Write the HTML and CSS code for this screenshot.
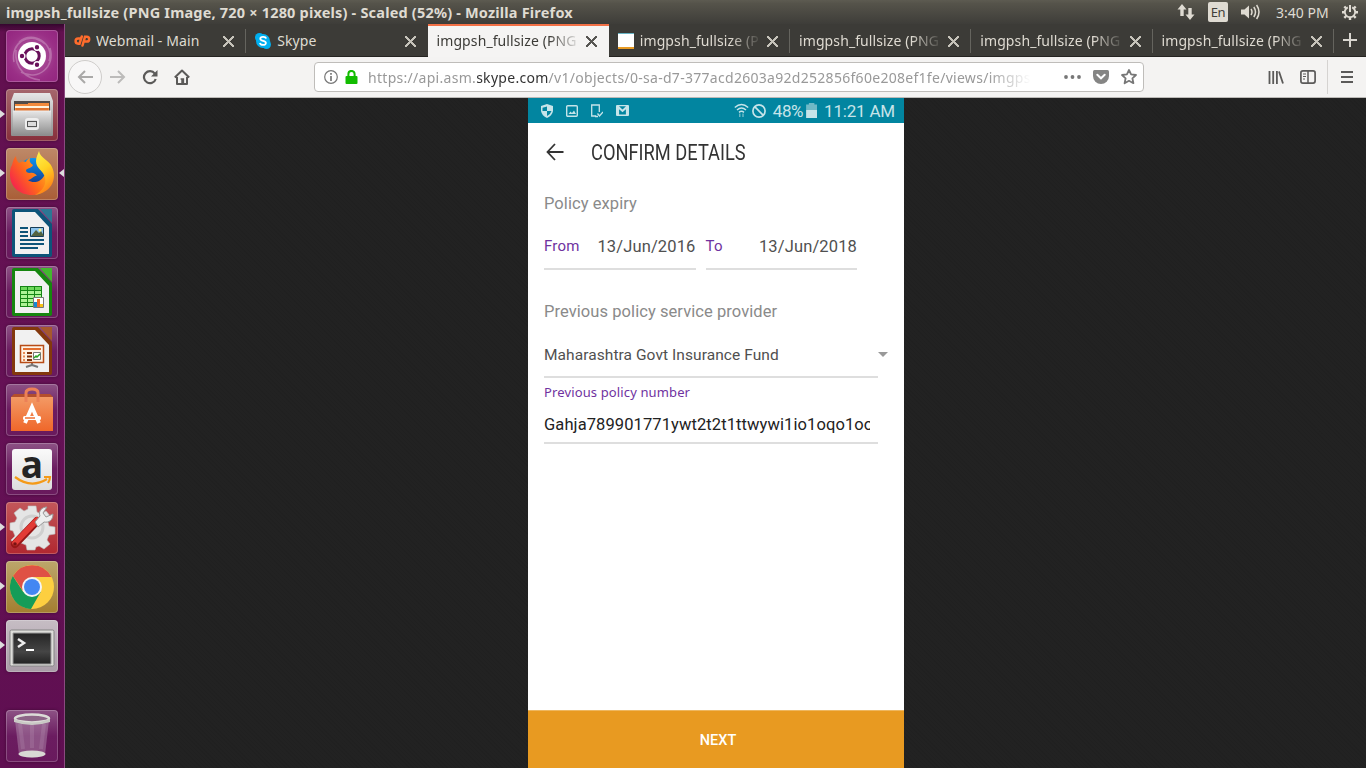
FILE: index.html
```html
<!DOCTYPE html>
<html lang="en">
<head>
<meta charset="utf-8">
<title>imgpsh_fullsize (PNG Image, 720 × 1280 pixels)</title>
<link rel="stylesheet" href="styles.css">
</head>
<body>
<header class="panel">
  <div class="panel-title">imgpsh_fullsize (PNG Image, 720 × 1280 pixels) - Scaled (52%) - Mozilla Firefox</div>
  <div class="panel-tray">
    <svg class="tray-net" width="18" height="18" viewBox="0 0 18 18" fill="#dfdbd2"><path d="M5 1 9.500 6.500H6.700V13H3.300V6.500H.5zM13 17 8.500 11.500h2.800V5h3.400v6.500h2.800z"/></svg>
    <span class="tray-lang">En</span>
    <svg class="tray-vol" width="20" height="18" viewBox="0 0 20 18"><path d="M0 6.500h3.500L8 2.500v13l-4.500-4H0z" fill="#dfdbd2"/><g fill="none" stroke="#dfdbd2" stroke-width="1.500"><path d="M10 6q2 3 0 6M12.800 4q3.400 5 0 10M15.600 2q4.800 7 0 14"/></g></svg>
    <span class="tray-clock">3:40 PM</span>
    <svg class="tray-gear" width="18" height="18" viewBox="0 0 18 18" fill="none" stroke="#dfdbd2"><path d="M6.800 4.300a5.200 5.200 0 1 0 4.400 0" stroke-width="1.900"/><path d="M9 2v7" stroke-width="2"/><path d="M1 9.200h2.600M14.400 9.200H17M3.300 3.500l1.900 1.900M14.700 3.500l-1.900 1.900M3.300 14.900l1.900-1.900M14.700 14.900l-1.900-1.900M9 14.400V17" stroke-width="2.400"/></svg>
  </div>
</header>
<div class="desktop">
  <nav class="launcher">
    <div class="tile tile-dash"><svg width="52" height="52" viewBox="0 0 52 52"><g fill="none" stroke="#fff" stroke-opacity=".25" stroke-width="1.500"><path d="M8 32C4 14 22 0 39 14M44 18c6 18-12 34-29 24M13 12C28-1 49 15 43 31M10 20c-2 20 12 29 24 30"/></g><circle cx="26" cy="26" r="14" fill="#fff"/><circle cx="26" cy="26" r="7.200" fill="none" stroke="#68105a" stroke-width="3"/><g stroke="#fff" stroke-width="1.400" fill="#68105a"><circle cx="16" cy="26" r="2.900"/><circle cx="31" cy="17.300" r="2.900"/><circle cx="31" cy="34.700" r="2.900"/></g></svg></div>
    <div class="tile tile-files is-running"><svg width="52" height="52" viewBox="0 0 52 52"><defs><linearGradient id="metal" x2="0" y2="1"><stop stop-color="#e6e6e6"/><stop offset="1" stop-color="#8e8e8e"/></linearGradient></defs><path d="M8 4h36l3 8v34q0 1-1 1H6q-1 0-1-1V12z" fill="url(#metal)"/><path d="M8 12h36v12H8z" fill="#514b48"/><path d="M9 15h13v-1h21v8H9z" fill="#f28a3c"/><path d="M9 17h34v2H9z" fill="#fff3dd"/><path d="M10 19h32v3H10z" fill="#df7430"/><path d="M7 22h38v24H7z" fill="url(#metal)"/><path d="M7 22h38" stroke="#eee"/><rect x="20" y="30" width="12" height="10" rx="2" fill="#ddd" stroke="#eee" stroke-width="2"/><rect x="21.500" y="32.500" width="9" height="5" fill="#ddd" stroke="#555"/></svg></div>
    <div class="tile tile-firefox is-running is-focused"><svg width="52" height="52" viewBox="0 0 52 52"><defs><linearGradient id="fox" x1=".8" x2="0" y1=".2" y2=".7"><stop stop-color="#ffb01e"/><stop offset=".5" stop-color="#ff6a1a"/><stop offset="1" stop-color="#f5224e"/></linearGradient><linearGradient id="globe" x2="0" y2="1"><stop stop-color="#0a94f0"/><stop offset="1" stop-color="#152f83"/></linearGradient><linearGradient id="tail" x2=".3" y2="1"><stop stop-color="#fff251"/><stop offset=".5" stop-color="#ffd324"/><stop offset="1" stop-color="#ff8418"/></linearGradient></defs><circle cx="27" cy="25" r="15" fill="url(#globe)"/><path d="M6 17c1-4 2-7 4-9 0 3 1 5 3 7 2-1 4-2 7-1 0-2 2-3 4-4-1 3 0 5 3 7-1 3-5 3-7 5 0 2 1 3 4 3 3-1 6 1 7 3-3-1-5 4-9 4 5 4 13 2 16-4l9-3c-1 14-10 22-21 22C13 47 4 38 4 27c0-4 0-7 2-10z" fill="url(#fox)"/><path d="M33 3c1 7 10 9 13 16 6 13-2 26-17 28 8-4 13-12 9-20-2-5-8-7-8-14 0-4 2-7 3-10z" fill="url(#tail)"/></svg></div>
    <div class="tile tile-office"><svg width="52" height="52" viewBox="0 0 52 52"><path d="M8 2h24l14 15v31q0 2-2 2H8q-2 0-2-2V4q0-2 2-2z" fill="#0d5479"/><path d="M34 2h12v14z" fill="#2c7794"/><path d="M9 5h20l14 15v27H9z" fill="#f1f1f1"/><path d="M14 21h8M14 25h8M14 29h8M14 33h24M14 37h24M14 41h18" stroke="#0d5479" stroke-width="2"/><path d="M24.500 20.500h13v9h-13z" fill="#8cc4ed" stroke="#183e57"/><path d="m25 29 5-6 3 3 2-2 3 5z" fill="#536340"/><circle cx="34" cy="23" r="1.500" fill="#fff68a"/></svg></div>
    <div class="tile tile-office"><svg width="52" height="52" viewBox="0 0 52 52"><path d="M8 2h24l14 15v31q0 2-2 2H8q-2 0-2-2V4q0-2 2-2z" fill="#16860f"/><path d="M34 2h12v14z" fill="#43b72f"/><path d="M9 5h20l14 15v27H9z" fill="#f1f1f1"/><path d="M14 20h22v21H14z" fill="#168515"/><g fill="#aef296"><path d="M15 21h6v3h-6zM22 21h6v3h-6zM29 21h6v3h-6z" fill="#6ed95b"/><path d="M15 25h6v3h-6zM22 25h6v3h-6zM29 25h6v3h-6zM15 29h6v3h-6zM22 29h6v3h-6zM29 29h6v3h-6zM15 33h6v3h-6zM22 33h6v3h-6zM15 37h6v3h-6zM22 37h6v3h-6z"/></g><path d="M27.500 31.500h10v10h-10z" fill="#fff" stroke="#777"/><path d="M28 36h3v5h-3z" fill="#1789d4"/><path d="M31 33h3v8h-3z" fill="#f06b23"/><path d="M34 38h3v3h-3z" fill="#f6c216"/></svg></div>
    <div class="tile tile-office"><svg width="52" height="52" viewBox="0 0 52 52"><path d="M8 2h24l14 15v31q0 2-2 2H8q-2 0-2-2V4q0-2 2-2z" fill="#83380d"/><path d="M34 2h12v14z" fill="#a6582d"/><path d="M9 5h20l14 15v27H9z" fill="#f1f1f1"/><path d="M26 38v2l-6 2M26 40l6 2" stroke="#777" stroke-width="2" fill="none"/><path d="M14.500 20.500h23v17h-23z" fill="#fff3e5" stroke="#b84c17" stroke-width="1.500"/><path d="M17 24h18" stroke="#e36e2e" stroke-width="2"/><path d="M17 28h2M17 31.500h2M17 35h2" stroke="#e88c55" stroke-width="2"/><path d="M21 28h5M21 31.500h5M21 35h5" stroke="#81340d" stroke-width="2"/><path d="M27.500 27.500h7v7h-7z" fill="#fff" stroke="#777"/><path d="m28 33 2-2 1 1 3-3" stroke="#28a322" stroke-width="1.500" fill="none"/></svg></div>
    <div class="tile tile-software"><svg width="52" height="52" viewBox="0 0 52 52"><defs><linearGradient id="bag" x2="0" y2="1"><stop stop-color="#f39a65"/><stop offset="1" stop-color="#ef672a"/></linearGradient></defs><path d="M5 13 8 10h36l3 3z" fill="#b44e2c"/><path d="M5 13h42v34H5z" fill="url(#bag)"/><path d="M20 18V9q0-4 6-4t6 4v9" fill="none" stroke="#ec8057" stroke-width="3"/><path d="m19 39 7-16 7 16" fill="none" stroke="#fff" stroke-width="3.800"/><rect x="17" y="32" width="18" height="4" rx="1.500" fill="#fff"/><path d="M19 34h10" stroke="#ef7035" stroke-width="1.500"/></svg></div>
    <div class="tile tile-office"><div class="amazon"><span>a</span><svg width="40" height="12" viewBox="0 0 40 12" fill="none" stroke="#f49a18" stroke-width="2.200"><path d="M2 2q16 12 32 2M31 2h6q0 3-2 6"/></svg></div></div>
    <div class="tile tile-settings is-running"><svg width="52" height="52" viewBox="0 0 52 52"><g fill="#e5e5e5" stroke="#bdbdbd" stroke-width=".6"><path d="m22 4 8 0 1 6 4 2 5-3 5 6-3 5 1 4 6 1v7l-6 1-2 5 3 4-6 5-5-3-3 1-1 3h-8l-1-5-5-2-5 3-5-6 4-4-2-5-3-1v-7l5-1 2-4-3-5 6-5 4 3 4-2z"/></g><circle cx="26" cy="25" r="11" fill="none" stroke="#cfcfcf" stroke-width="3"/><path d="m9 42 22-23" stroke="#971717" stroke-width="8" stroke-linecap="round"/><path d="m9 41 22-23" stroke="#e23b36" stroke-width="5.500" stroke-linecap="round"/><path d="m29 20 5-6c-2-5 2-9 7-9l-4 6 3 4 7-3c0 6-4 9-9 8l-6 5z" fill="#eee" stroke="#999"/><circle cx="9" cy="42" r="1.800" fill="#791313"/></svg></div>
    <div class="tile tile-chrome is-running"><svg width="52" height="52" viewBox="0 0 52 52"><circle cx="26" cy="26" r="22" fill="#fdcf40"/><path d="M6.900 15A22 22 0 0 0 25 48l9.700-17L26 26l-8.700 5z" fill="#159c58"/><path d="M26 16h19.500A22 22 0 0 0 7 15l10 15z" fill="#df5145"/><circle cx="26" cy="26" r="10" fill="#f4f4f4"/><circle cx="26" cy="26" r="8" fill="#4387f2"/></svg></div>
    <div class="tile tile-terminal is-running"><svg width="52" height="52" viewBox="0 0 52 52"><defs><linearGradient id="term" x2="0" y2="1"><stop stop-color="#252525"/><stop offset=".6" stop-color="#454545"/><stop offset="1" stop-color="#222"/></linearGradient></defs><rect x="4" y="10" width="44" height="36" rx="1.500" fill="#dededa" stroke="#858585"/><path d="M7 13h38v31H7z" fill="url(#term)" stroke="#999"/><path d="m12 19 6 4-6 4" stroke="#eee" stroke-width="2.500" fill="none"/><path d="M20 30h8" stroke="#fff" stroke-width="2"/></svg></div>
    <div class="tile tile-trash"><svg width="52" height="52" viewBox="0 0 52 52"><path d="m9 10 4 35q13 5 26 0l4-35" fill="#d5c5d3" fill-opacity=".32"/><path d="m14 14 3 25M38 14l-3 25M26 14v24" stroke="#fff" stroke-opacity=".1" stroke-width="4"/><ellipse cx="26" cy="44" rx="13.500" ry="3.500" fill="#d9d9d4"/><ellipse cx="26" cy="8.500" rx="17" ry="4" fill="#8d6587" stroke="#dcdcd8" stroke-width="2.500"/><path d="M8 9v3q18 6 36 0V9q-18 7-36 0" fill="#c9c9c5"/></svg></div>
  </nav>
  <main class="browser">
    <div class="tabs">
      <div class="tab"><svg class="tab-icon" width="17" height="12" viewBox="0 0 17 12" fill="none" stroke="#ff6c2c" stroke-width="2.500" stroke-linecap="round"><path d="M6 3.500H4.200a2.600 2.600 0 0 0 0 5.200H5.500L7.800 1.500M8.500 10.500 11 1.800h1.800a2.300 2.300 0 0 1 0 4.800H11"/></svg><span class="tab-label">Webmail - Main</span><i class="close"></i></div>
      <div class="tab"><svg class="tab-icon" width="16" height="16" viewBox="0 0 16 16"><circle cx="8" cy="8" r="7" fill="#00aff0"/><circle cx="4.500" cy="4.500" r="4.500" fill="#00aff0"/><circle cx="11.500" cy="11.500" r="4.500" fill="#00aff0"/><path d="M11 5.600C10.500 3.200 5.300 3.400 5.300 5.800c0 2.600 5.600 1.700 5.600 4.200 0 2.600-5.300 2.500-6 0" fill="none" stroke="#fff" stroke-width="1.800"/></svg><span class="tab-label">Skype</span><i class="close"></i></div>
      <div class="tab tab-active"><span class="tab-label tab-fade">imgpsh_fullsize (PNG</span><i class="close"></i></div>
      <div class="tab"><i class="tab-icon thumb"></i><span class="tab-label tab-fade">imgpsh_fullsize (P</span><i class="close"></i></div>
      <div class="tab"><span class="tab-label tab-fade">imgpsh_fullsize (PNG</span><i class="close"></i></div>
      <div class="tab"><span class="tab-label tab-fade">imgpsh_fullsize (PNG</span><i class="close"></i></div>
      <div class="tab"><span class="tab-label tab-fade">imgpsh_fullsize (PNG</span><i class="close"></i></div>
      <div class="new-tab"><svg width="14" height="14" viewBox="0 0 14 14" stroke="#d9d6d0" stroke-width="2"><path d="M7 0v14M0 7h14"/></svg></div>
    </div>
    <div class="toolbar">
      <div class="nav-buttons">
        <span class="back"><svg width="16" height="14" viewBox="0 0 16 14" fill="none" stroke="#aaa9a8" stroke-width="2"><path d="M8 1 2 7l6 6M2 7h14"/></svg></span>
        <svg class="forward" width="16" height="14" viewBox="0 0 16 14" fill="none" stroke="#bcbbba" stroke-width="2"><path d="m8 1 6 6-6 6M14 7H0"/></svg>
        <svg class="reload" width="16" height="16" viewBox="0 0 16 16" fill="none" stroke="#5b5a59" stroke-width="2.200"><path d="M12.800 4.600A6 6 0 1 0 13.700 10"/><path d="M15.500 1v6.500H9z" fill="#5b5a59" stroke="none"/></svg>
        <svg class="home" width="16" height="16" viewBox="0 0 16 16" fill="none" stroke="#5b5a59" stroke-width="2"><path d="m.8 8.500 7.200-7 7.200 7M3 8v7h10V8" stroke-linejoin="round"/><path d="M8 15v-5M6.600 9.900h2.800V15" stroke-width="1.500"/></svg>
      </div>
      <div class="urlbar">
        <svg width="14" height="14" viewBox="0 0 14 14" fill="none" stroke="#777"><circle cx="7" cy="7" r="6.300" stroke-width="1.200"/><path d="M7 6v5M7 3v1.700" stroke-width="1.700"/></svg>
        <svg class="lock" width="13" height="14" viewBox="0 0 13 14"><path d="M3.400 7V4a3.100 3.100 0 0 1 6.200 0v3" fill="none" stroke="#12bc00" stroke-width="2"/><rect x=".5" y="6" width="12" height="8" rx="1" fill="#12bc00"/></svg>
        <span class="url">https://api.asm.<b>skype.com</b>/v1/objects/0-sa-d7-377acd2603a92d252856f60e208ef1fe/views/imgps</span>
        <svg class="dots" width="17" height="4" viewBox="0 0 17 4" fill="#777"><circle cx="2" cy="2" r="1.900"/><circle cx="8.500" cy="2" r="1.900"/><circle cx="15" cy="2" r="1.900"/></svg>
        <svg class="pocket" width="16" height="14" viewBox="0 0 16 14"><path d="M1.500 0h13Q16 0 16 1.500V6A8 8 0 0 1 0 6V1.500Q0 0 1.500 0z" fill="#858584"/><path d="m4.300 4.800 3.700 3.500 3.700-3.500" fill="none" stroke="#fff" stroke-width="2" stroke-linecap="round"/></svg>
        <svg class="star" width="16" height="16" viewBox="0 0 16 16" fill="none" stroke="#777" stroke-width="1.800" stroke-linejoin="round"><path d="m8 1 2.100 4.400 4.900.6-3.600 3.300 1 4.900L8 11.800l-4.400 2.400 1-4.900L1 6l4.900-.6z"/></svg>
      </div>
      <div class="tools">
        <svg width="16" height="14" viewBox="0 0 16 14" fill="none" stroke="#5b5a59" stroke-width="1.800"><path d="M1.500 1v13M5.200 1v13M8.900 1v13M11 1.500l4 12"/></svg>
        <svg class="sidebar" width="16" height="14" viewBox="0 0 16 14" fill="none" stroke="#5b5a59"><rect x=".9" y=".9" width="14.200" height="12.200" rx="2" stroke-width="1.700"/><path d="M8 1v12" stroke-width="1.500"/><path d="M3 4h3M3 6.500h3M3 9h2"/></svg>
        <i class="divider"></i>
        <svg width="12" height="12" viewBox="0 0 12 12" stroke="#5b5a59" stroke-width="2"><path d="M0 1h12M0 6h12M0 11h12"/></svg>
      </div>
    </div>
    <div class="viewer">
      <section class="phone">
        <div class="status">
          <div class="status-left">
            <svg width="12" height="14" viewBox="0 0 12 14"><path d="M6 0 12 2v5q-1 5-6 7-5-2-6-7V2z" fill="#c6e4e9"/><path d="M6 2.500V7h4.500q-1 3.500-4.500 5V7H1.500V3.800z" fill="#0285a0"/></svg>
            <svg width="12" height="12" viewBox="0 0 12 12" fill="none" stroke="#c6e4e9" stroke-width="1.400"><rect x=".7" y=".7" width="10.600" height="10.600" rx="1"/><path d="m2.500 9 2-2.500L6 8l2-2.500L10 9z" fill="#c6e4e9" stroke="none"/></svg>
            <svg width="13" height="14" viewBox="0 0 13 14" fill="none" stroke="#c6e4e9" stroke-width="1.300"><path d="M6 12H1.700V1h7.600v7"/><path d="M5 12.500h3M7.500 9.500l2 2.500 3.500-4"/></svg>
            <svg width="13" height="11" viewBox="0 0 13 11"><path d="M1 0h11q1 0 1 1v9q0 1-1 1H1q-1 0-1-1V1q0-1 1-1z" fill="#c6e4e9"/><path d="M3 1.200h7L6.500 4.400zM3.100 4.200V9.600h6.800V4.200L6.500 7.300z" fill="#0285a0"/></svg>
          </div>
          <div class="status-right">
            <svg width="15" height="15" viewBox="0 0 15 15" fill="none" stroke="#c6e4e9" stroke-width="1.500"><path d="M.8 4.500q6.700-6 13.400 0M3 7q4.500-4 9 0M5 9.300q2.500-2 5 0"/><path d="M5.800 14v-3.500M9 10.500V14" stroke="#85c3ce" stroke-width="1.200"/></svg>
            <svg class="blocked" width="14" height="14" viewBox="0 0 14 14" fill="none" stroke="#c6e4e9" stroke-width="1.700"><circle cx="7" cy="7" r="6.100"/><path d="m2.700 2.700 8.600 8.600"/></svg>
            <span class="battery-text">48%</span><i class="battery"></i><span class="clock">11:21 AM</span>
          </div>
        </div>
        <div class="appbar">
          <svg width="18" height="18" viewBox="0 0 18 18" fill="none" stroke="#333" stroke-width="1.800"><path d="M9 1 1.500 9 9 17M1.500 9H17.500"/></svg>
          <h1>CONFIRM DETAILS</h1>
        </div>
        <div class="form">
          <p class="caption caption-expiry">Policy expiry</p>
          <div class="dates">
            <div class="date"><label>From</label><span>13/Jun/2016</span></div>
            <div class="date"><label>To</label><span>13/Jun/2018</span></div>
          </div>
          <p class="caption caption-provider">Previous policy service provider</p>
          <div class="select"><span>Maharashtra Govt Insurance Fund</span><i></i></div>
          <label class="number-label">Previous policy number</label>
          <div class="number"><span>Gahja789901771ywt2t2t1ttwywi1io1oqo1oo</span></div>
        </div>
        <div class="next"><span>NEXT</span></div>
      </section>
    </div>
  </main>
</div>
</body>
</html>
```
FILE: styles.css
```css
* { box-sizing: border-box; }
body { margin: 0; width: 1366px; height: 768px; overflow: hidden; font-family: "Noto Sans", "Open Sans", sans-serif; background: #222; }
svg { display: block; flex: none; }

.panel { height: 24px; display: flex; justify-content: space-between; align-items: center; padding: 0 7px 0 6px; color: #dfdbd2; background: linear-gradient(#5d5b51, #55534a 15%, #3e3d39); white-space: nowrap; }
.panel-title { font-size: 14.500px; font-weight: 700; letter-spacing: .19px; line-height: 24px; }
.panel-tray { display: flex; align-items: center; }
.tray-lang { width: 20px; height: 20px; margin-left: 13px; border-radius: 2px; background: #dfdbd2; color: #3f3e39; font-size: 13px; line-height: 20px; text-align: center; letter-spacing: -.5px; }
.tray-vol { margin-left: 13px; }
.tray-clock { width: 53px; margin-left: 15px; font-size: 14px; letter-spacing: 0; }
.tray-gear { margin-left: 12px; }

.desktop { display: flex; height: 744px; }
.launcher { width: 65px; padding: 6px 0 0 6px; display: flex; flex-direction: column; gap: 7px; background: linear-gradient(#35062e, #62104f 8px, #651155 50%, #5f0f51); border-right: 1px solid #8b4a80; }
.tile { position: relative; width: 52px; height: 52px; flex: none; border-radius: 4px; box-shadow: inset 0 0 0 1px rgba(255,255,255,.22), 0 0 3px rgba(30,0,25,.5); }
.tile-dash { background: radial-gradient(circle, #b668a8, #9a2f86 65%, #92247e); }
.tile-files { background: linear-gradient(#a5666c, #872f3b); }
.tile-firefox { background: linear-gradient(#be8968, #a95e37); }
.tile-office, .tile-software, .tile-trash { background: linear-gradient(#8d5285, #6b1c60 50%, #691a5d); }
.tile-settings { background: linear-gradient(#c2575a, #b12830); }
.tile-chrome { background: linear-gradient(#bca66b, #a37e30); }
.tile-terminal { background: linear-gradient(#c6bdc4, #a99ca7); }
.tile-trash { margin-top: 31px; }
.is-running::before { content: ""; position: absolute; left: -6px; top: 21px; border: 4px solid transparent; border-left: 5px solid #ddd; border-right: 0; }
.is-focused::after { content: ""; position: absolute; right: -6px; top: 21px; border: 4px solid transparent; border-right: 5px solid #ddd; border-left: 0; }
.amazon { position: relative; width: 40px; height: 41px; margin: 0 0 0 6px; transform: translateY(6px); border-radius: 3px; background: linear-gradient(#fafafa, #ddd); }
.amazon span { display: block; text-align: center; font: 700 37px/30px "Open Sans", sans-serif; color: #242424; }
.amazon svg { position: absolute; left: 1px; top: 26px; }

.browser { flex: 1; display: flex; flex-direction: column; min-width: 0; }
.tabs { height: 33px; display: flex; background: #3c3b37; border-bottom: 1px solid #252421; }
.tab { width: 181.250px; flex: none; display: flex; align-items: center; padding: 2px 12px 0 9px; color: #dfdbd2; position: relative; }
.tab::after { content: ""; position: absolute; right: 0; top: 5px; width: 1px; height: 24px; background: #65645e; }
.tab:nth-child(2)::after, .tab-active::after { display: none; }
.tab-active { height: 33px; padding-top: 0; background: #f5f4f3; border-top: 2px solid #f27046; color: #3c3b37; }
.tab-active .tab-label, .tab-active .close { margin-bottom: 1px; }
.tab-icon { margin-right: 5px; flex: none; }
.thumb { width: 16px; height: 16px; margin-right: 6px; background: linear-gradient(#69b5c5 0 1px, #fff 1px 14px, #e89b24 14px); }
.tab:nth-child(2) .tab-icon { margin-right: 6px; }
.tab-label { flex: 1; min-width: 0; overflow: hidden; white-space: nowrap; font-size: 14px; line-height: 22px; letter-spacing: .1px; }
.tab-fade { margin-right: 5px; -webkit-mask-image: linear-gradient(90deg, #000 calc(100% - 32px), transparent); mask-image: linear-gradient(90deg, #000 calc(100% - 32px), transparent); }
.close { width: 11px; height: 11px; flex: none; background: linear-gradient(45deg, transparent 45%, currentColor 45% 55%, transparent 55%), linear-gradient(-45deg, transparent 45%, currentColor 45% 55%, transparent 55%); opacity: .85; }
.new-tab { padding: 9px 0 0 9px; }

.toolbar { height: 41px; display: flex; align-items: center; background: #f4f3f2; border-bottom: 1px solid #bcbab7; }
.nav-buttons { width: 249px; display: flex; align-items: center; padding-left: 3px; }
.back { width: 34px; height: 34px; border: 1px solid #cfcdcb; border-radius: 50%; display: grid; place-items: center; background: #f8f7f7; }
.forward { margin-left: 8px; }
.reload { margin-left: 16px; }
.home { margin-left: 16px; }
.urlbar { width: 830px; height: 30px; display: flex; align-items: center; padding: 0 6px 0 9px; background: #fff; border: 1px solid #bfbdba; border-radius: 4px; }
.lock { margin-left: 7px; }
.url { width: 663px; margin-left: 10px; overflow: hidden; white-space: nowrap; font-size: 14px; letter-spacing: .29px; color: #999; -webkit-mask-image: linear-gradient(90deg, #000 620px, transparent 663px); mask-image: linear-gradient(90deg, #000 620px, transparent 663px); }
.url b { font-weight: 400; color: #333; }
.dots { margin-left: 33px; }
.pocket { margin-left: 12px; }
.star { margin-left: 12px; }
.tools { flex: 1; display: flex; align-items: center; justify-content: flex-end; padding-right: 13px; }
.sidebar { margin-left: 16px; }
.divider { width: 1px; height: 34px; margin: 0 13px 0 11px; background: #d5d3d1; }

.viewer { flex: 1; padding-left: 463px; background-color: #222; background-image: repeating-linear-gradient(45deg, rgba(0,0,0,.05) 0 1px, transparent 1px 3px); }
.phone { width: 376px; height: 670px; display: flex; flex-direction: column; background: #fff; font-family: Roboto, sans-serif; }
.status { height: 25px; flex: none; display: flex; justify-content: space-between; align-items: center; padding: 0 9px 0 13px; background: #0285a0; color: #c6e4e9; }
.status-left { display: flex; align-items: center; gap: 12.500px; }
.status-right { display: flex; align-items: center; font-size: 17px; line-height: 25px; white-space: nowrap; }
.blocked { margin-left: 3px; }
.battery-text { margin: 1px 3px 0 7px; letter-spacing: -.4px; }
.battery { width: 11px; height: 15px; background: linear-gradient(#70b9c6 50%, #c6e4e9 50%); clip-path: polygon(25% 0, 75% 0, 75% 10%, 100% 10%, 100% 100%, 0 100%, 0 10%, 25% 10%); }
.clock { margin: 1px 0 0 7px; letter-spacing: -.2px; }
.appbar { height: 58px; flex: none; display: flex; align-items: center; padding-left: 18px; }
.appbar h1 { margin: 0 0 0 27px; font-size: 21.500px; font-weight: 400; color: #333; white-space: nowrap; transform: scaleX(.85); transform-origin: left; }
.form { flex: 1; padding: 0 16px; }
.form p { margin: 0; }
.caption { color: #8a8a8a; font-size: 16.500px; line-height: 20px; letter-spacing: .07px; white-space: nowrap; }
.caption-expiry { padding-top: 13px; }
.dates { display: flex; gap: 10px; padding-top: 22px; }
.date { width: 151.500px; height: 34px; display: flex; justify-content: space-between; align-items: flex-start; border-bottom: 2px solid #dedede; white-space: nowrap; }
.date label { color: #6f32a0; font-size: 15px; line-height: 20px; letter-spacing: .2px; }
.date span { color: #505050; font-size: 16.500px; line-height: 22px; letter-spacing: .14px; }
.caption-provider { padding-top: 32px; }
.select { height: 56px; width: 334px; position: relative; padding-top: 23px; color: #505050; font-size: 15.500px; line-height: 20px; letter-spacing: .07px; white-space: nowrap; border-bottom: 2px solid #dedede; }
.select i { position: absolute; left: 334px; top: 30px; border: 5px solid transparent; border-top-color: #999; border-bottom: 0; }
.number-label { display: block; padding-top: 4px; color: #6f32a0; font: 13px/20px "Noto Sans", sans-serif; letter-spacing: .13px; }
.number { width: 334px; height: 42px; padding-top: 12px; border-bottom: 2px solid #dedede; color: #222; font-size: 16.500px; line-height: 22px; letter-spacing: .1px; }
.number span { display: block; width: 326px; overflow: hidden; white-space: nowrap; }
.next { height: 58px; flex: none; display: grid; place-items: center; padding: 2px 0 0 4px; background: #e89a21; border-top: 1px solid #eeb75f; color: #fff; font-size: 14.500px; font-weight: 500; }
```
